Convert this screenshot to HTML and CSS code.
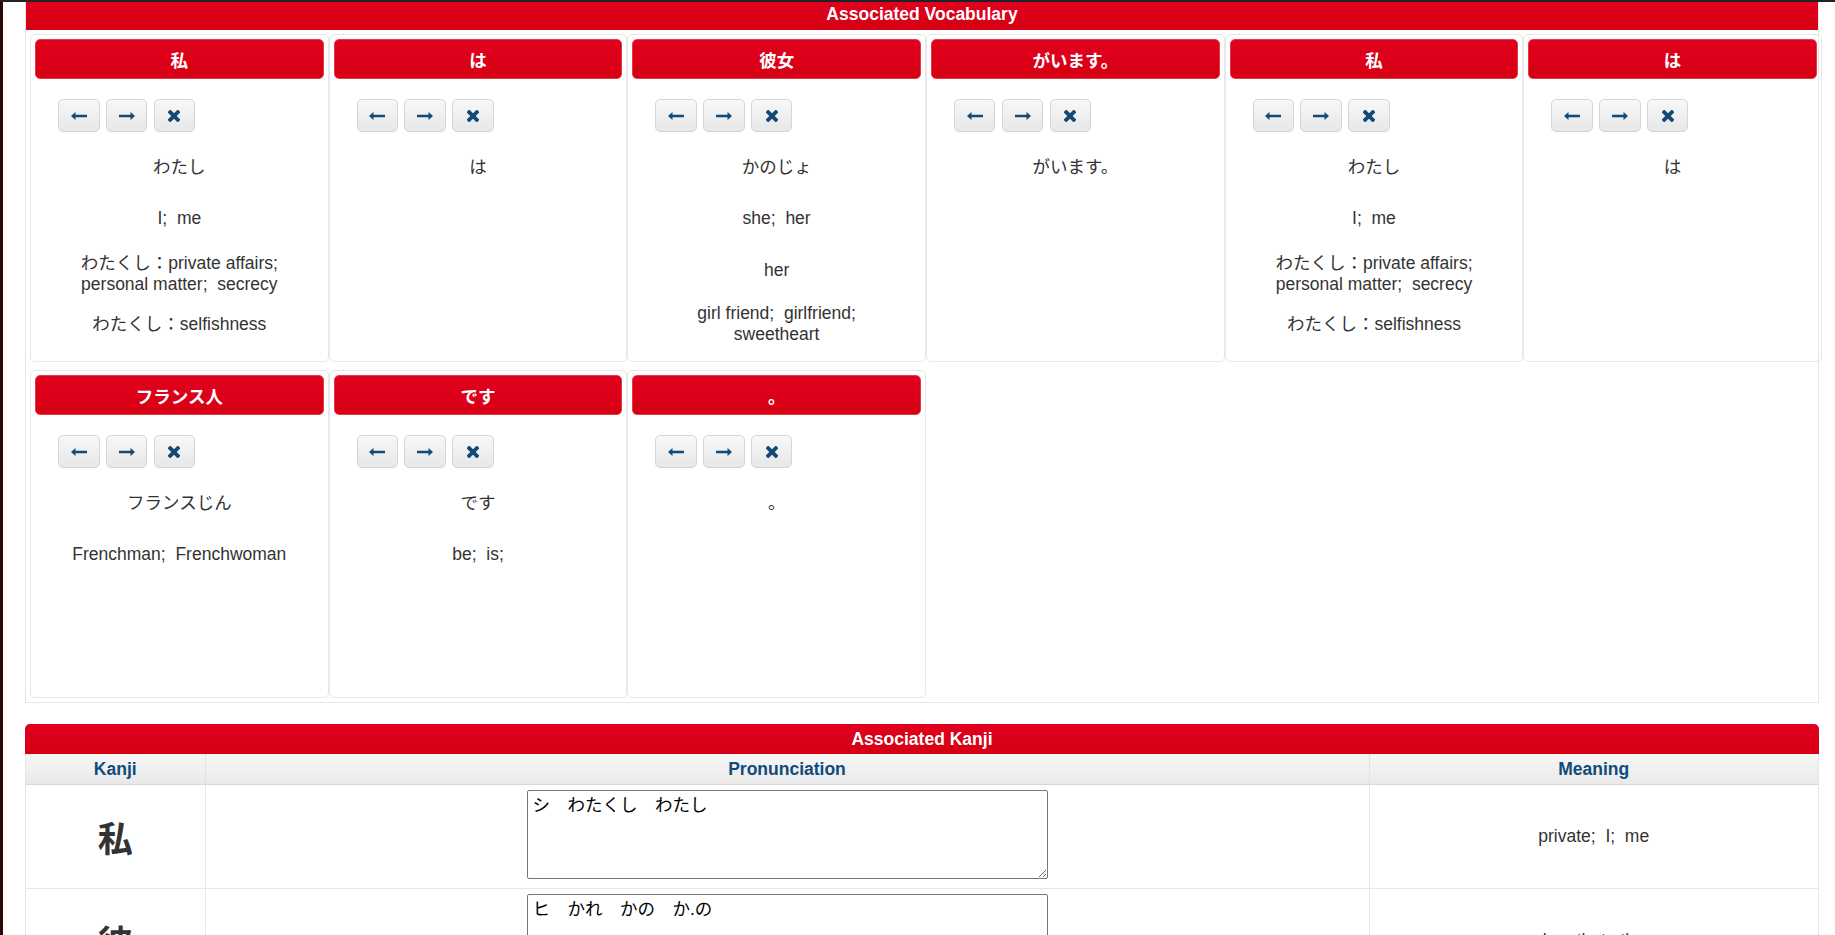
FILE: index.html
```html
<!DOCTYPE html>
<html lang="ja">
<head>
<meta charset="utf-8">
<title>Associated Vocabulary</title>
<link rel="stylesheet" href="styles.css">
</head>
<body>
<div class="topline"></div>
<div class="page">
  <section class="panel vocab">
    <div class="panel-heading">Associated Vocabulary</div>
    <div class="panel-body">
      <div class="cards">

        <div class="card">
          <div class="card-head">私</div>
          <div class="btns">
            <button class="btn"><svg width="16" height="8" viewBox="0 0 16 8"><path d="M0 4 L4.5 0 V2.7 H16 V5.3 H4.5 V8 Z"/></svg></button>
            <button class="btn"><svg width="16" height="8" viewBox="0 0 16 8"><path d="M16 4 L11.5 0 V2.7 H0 V5.3 H11.5 V8 Z"/></svg></button>
            <button class="btn"><svg width="12" height="12" viewBox="0 0 12 12"><path class="x" d="M2.2 2.2 L9.8 9.8 M9.8 2.2 L2.2 9.8"/></svg></button>
          </div>
          <div class="reading">わたし</div>
          <div class="mean first">I;&nbsp; me</div>
          <div class="mean g23">わたくし：private affairs;<br>personal matter;&nbsp; secrecy</div>
          <div class="mean">わたくし：selfishness</div>
        </div>

        <div class="card">
          <div class="card-head">は</div>
          <div class="btns">
            <button class="btn"><svg width="16" height="8" viewBox="0 0 16 8"><path d="M0 4 L4.5 0 V2.7 H16 V5.3 H4.5 V8 Z"/></svg></button>
            <button class="btn"><svg width="16" height="8" viewBox="0 0 16 8"><path d="M16 4 L11.5 0 V2.7 H0 V5.3 H11.5 V8 Z"/></svg></button>
            <button class="btn"><svg width="12" height="12" viewBox="0 0 12 12"><path class="x" d="M2.2 2.2 L9.8 9.8 M9.8 2.2 L2.2 9.8"/></svg></button>
          </div>
          <div class="reading">は</div>
        </div>

        <div class="card">
          <div class="card-head">彼女</div>
          <div class="btns">
            <button class="btn"><svg width="16" height="8" viewBox="0 0 16 8"><path d="M0 4 L4.5 0 V2.7 H16 V5.3 H4.5 V8 Z"/></svg></button>
            <button class="btn"><svg width="16" height="8" viewBox="0 0 16 8"><path d="M16 4 L11.5 0 V2.7 H0 V5.3 H11.5 V8 Z"/></svg></button>
            <button class="btn"><svg width="12" height="12" viewBox="0 0 12 12"><path class="x" d="M2.2 2.2 L9.8 9.8 M9.8 2.2 L2.2 9.8"/></svg></button>
          </div>
          <div class="reading">かのじょ</div>
          <div class="mean first">she;&nbsp; her</div>
          <div class="mean g30">her</div>
          <div class="mean g21">girl friend;&nbsp; girlfriend;<br>sweetheart</div>
        </div>

        <div class="card">
          <div class="card-head">がいます。</div>
          <div class="btns">
            <button class="btn"><svg width="16" height="8" viewBox="0 0 16 8"><path d="M0 4 L4.5 0 V2.7 H16 V5.3 H4.5 V8 Z"/></svg></button>
            <button class="btn"><svg width="16" height="8" viewBox="0 0 16 8"><path d="M16 4 L11.5 0 V2.7 H0 V5.3 H11.5 V8 Z"/></svg></button>
            <button class="btn"><svg width="12" height="12" viewBox="0 0 12 12"><path class="x" d="M2.2 2.2 L9.8 9.8 M9.8 2.2 L2.2 9.8"/></svg></button>
          </div>
          <div class="reading">がいます。</div>
        </div>

        <div class="card">
          <div class="card-head">私</div>
          <div class="btns">
            <button class="btn"><svg width="16" height="8" viewBox="0 0 16 8"><path d="M0 4 L4.5 0 V2.7 H16 V5.3 H4.5 V8 Z"/></svg></button>
            <button class="btn"><svg width="16" height="8" viewBox="0 0 16 8"><path d="M16 4 L11.5 0 V2.7 H0 V5.3 H11.5 V8 Z"/></svg></button>
            <button class="btn"><svg width="12" height="12" viewBox="0 0 12 12"><path class="x" d="M2.2 2.2 L9.8 9.8 M9.8 2.2 L2.2 9.8"/></svg></button>
          </div>
          <div class="reading">わたし</div>
          <div class="mean first">I;&nbsp; me</div>
          <div class="mean g23">わたくし：private affairs;<br>personal matter;&nbsp; secrecy</div>
          <div class="mean">わたくし：selfishness</div>
        </div>

        <div class="card">
          <div class="card-head">は</div>
          <div class="btns">
            <button class="btn"><svg width="16" height="8" viewBox="0 0 16 8"><path d="M0 4 L4.5 0 V2.7 H16 V5.3 H4.5 V8 Z"/></svg></button>
            <button class="btn"><svg width="16" height="8" viewBox="0 0 16 8"><path d="M16 4 L11.5 0 V2.7 H0 V5.3 H11.5 V8 Z"/></svg></button>
            <button class="btn"><svg width="12" height="12" viewBox="0 0 12 12"><path class="x" d="M2.2 2.2 L9.8 9.8 M9.8 2.2 L2.2 9.8"/></svg></button>
          </div>
          <div class="reading">は</div>
        </div>

        <div class="card">
          <div class="card-head">フランス人</div>
          <div class="btns">
            <button class="btn"><svg width="16" height="8" viewBox="0 0 16 8"><path d="M0 4 L4.5 0 V2.7 H16 V5.3 H4.5 V8 Z"/></svg></button>
            <button class="btn"><svg width="16" height="8" viewBox="0 0 16 8"><path d="M16 4 L11.5 0 V2.7 H0 V5.3 H11.5 V8 Z"/></svg></button>
            <button class="btn"><svg width="12" height="12" viewBox="0 0 12 12"><path class="x" d="M2.2 2.2 L9.8 9.8 M9.8 2.2 L2.2 9.8"/></svg></button>
          </div>
          <div class="reading">フランスじん</div>
          <div class="mean first">Frenchman;&nbsp; Frenchwoman</div>
        </div>

        <div class="card">
          <div class="card-head">です</div>
          <div class="btns">
            <button class="btn"><svg width="16" height="8" viewBox="0 0 16 8"><path d="M0 4 L4.5 0 V2.7 H16 V5.3 H4.5 V8 Z"/></svg></button>
            <button class="btn"><svg width="16" height="8" viewBox="0 0 16 8"><path d="M16 4 L11.5 0 V2.7 H0 V5.3 H11.5 V8 Z"/></svg></button>
            <button class="btn"><svg width="12" height="12" viewBox="0 0 12 12"><path class="x" d="M2.2 2.2 L9.8 9.8 M9.8 2.2 L2.2 9.8"/></svg></button>
          </div>
          <div class="reading">です</div>
          <div class="mean first">be;&nbsp; is;</div>
        </div>

        <div class="card">
          <div class="card-head">。</div>
          <div class="btns">
            <button class="btn"><svg width="16" height="8" viewBox="0 0 16 8"><path d="M0 4 L4.5 0 V2.7 H16 V5.3 H4.5 V8 Z"/></svg></button>
            <button class="btn"><svg width="16" height="8" viewBox="0 0 16 8"><path d="M16 4 L11.5 0 V2.7 H0 V5.3 H11.5 V8 Z"/></svg></button>
            <button class="btn"><svg width="12" height="12" viewBox="0 0 12 12"><path class="x" d="M2.2 2.2 L9.8 9.8 M9.8 2.2 L2.2 9.8"/></svg></button>
          </div>
          <div class="reading">。</div>
        </div>

      </div>
    </div>
  </section>

  <section class="panel kanji">
    <div class="panel-heading">Associated Kanji</div>
    <table class="ktable">
      <colgroup>
        <col class="c-kanji">
        <col class="c-pron">
        <col class="c-mean">
      </colgroup>
      <thead>
        <tr><th>Kanji</th><th>Pronunciation</th><th>Meaning</th></tr>
      </thead>
      <tbody>
        <tr>
          <td class="kchar">私</td>
          <td class="pron"><textarea class="ta">シ　わたくし　わたし</textarea></td>
          <td class="kmean">private;&nbsp; I;&nbsp; me</td>
        </tr>
        <tr>
          <td class="kchar">彼</td>
          <td class="pron"><textarea class="ta">ヒ　かれ　かの　か.の</textarea></td>
          <td class="kmean">he;&nbsp; that;&nbsp; the</td>
        </tr>
      </tbody>
    </table>
  </section>
</div>
</body>
</html>
```

FILE: styles.css
```css
html, body {
  margin: 0;
  padding: 0;
  background: #fff;
}

body {
  font-family: "Liberation Sans", "Noto Sans CJK JP", sans-serif;
  font-size: 17.5px;
  color: #333;
  border-left: 3px solid #2a0606;
  min-height: 935px;
  overflow: hidden;
}

.topline {
  position: fixed;
  top: 0;
  left: 0;
  right: 0;
  height: 2px;
  background: #222;
  z-index: 5;
}

.page {
  width: 1794px;
  margin-left: 22px;
}

.panel {
  border: 1px solid #e6e6e6;
  background: #fff;
}

.panel-heading {
  background: linear-gradient(#e1001f, #d60012);
  color: #fff;
  font-weight: bold;
  text-align: center;
}

.vocab {
  border-top: none;
}

.vocab .panel-heading {
  height: 30px;
  padding-top: 4px;
  line-height: 21.5px;
  box-sizing: border-box;
}

.vocab .panel-body {
  padding: 4px;
}

.cards {
  display: grid;
  grid-template-columns: repeat(6, 298.67px);
  row-gap: 8px;
}

.card {
  height: 328px;
  box-sizing: border-box;
  border: 1px solid #e8e8e8;
  border-radius: 5px;
  padding: 4px;
  text-align: center;
  line-height: 21.5px;
}

.card-head {
  height: 40px;
  box-sizing: border-box;
  padding-top: 11px;
  line-height: 21.5px;
  border-radius: 5px;
  border: 1px solid #e03a4c;
  background: linear-gradient(#e1001f, #d60012);
  color: #fff;
  font-weight: bold;
}

.btns {
  display: flex;
  gap: 6.3px;
  margin-top: 20px;
  margin-left: 23px;
}

.btn {
  width: 41.5px;
  height: 33.3px;
  padding: 0;
  box-sizing: border-box;
  border: 1px solid #d3d7d9;
  border-radius: 5px;
  background: linear-gradient(#f8f8f8, #e7e7e7);
  display: flex;
  align-items: center;
  justify-content: center;
}

.btn svg path {
  fill: #134a78;
}

.btn svg path.x {
  fill: none;
  stroke: #134a78;
  stroke-width: 3.8;
  stroke-linecap: square;
}

.reading {
  margin-top: 25px;
}

.mean {
  margin-top: 18.5px;
}

.mean.first { margin-top: 29.5px; }
.mean.g23 { margin-top: 23px; }
.mean.g30 { margin-top: 30.5px; }
.mean.g21 { margin-top: 21px; }

.kanji {
  margin-top: 21px;
  border-top: none;
  border-radius: 5px 5px 0 0;
}

.kanji .panel-heading {
  height: 30px;
  line-height: 30px;
  border-radius: 5px 5px 0 0;
  margin: 0 -1px;
}

.ktable {
  width: 100%;
  border-collapse: collapse;
  table-layout: fixed;
}

.c-kanji { width: 179px; }
.c-mean { width: 449px; }

.ktable th {
  height: 30px;
  box-sizing: border-box;
  padding: 0;
  background: linear-gradient(#f7f7f7, #e9e9e9);
  border-bottom: 1px solid #d5d9dc;
  border-right: 1px solid #e2e2e2;
  color: #0f4c7c;
  font-weight: bold;
  text-align: center;
  line-height: 28px;
}

.ktable th:last-child,
.ktable td:last-child {
  border-right: none;
}

.ktable td {
  height: 104px;
  box-sizing: border-box;
  padding: 0;
  border-bottom: 1px solid #e8e8e8;
  border-right: 1px solid #e8e8e8;
  text-align: center;
  vertical-align: middle;
}

.kchar {
  font-size: 35px;
  font-weight: bold;
  color: #333;
}

.ktable td.pron {
  vertical-align: top;
  padding-top: 5px;
}

.ta {
  display: block;
  margin: 0 auto;
  width: 521px;
  height: 89px;
  box-sizing: border-box;
  border: 1px solid #767676;
  border-radius: 2px;
  padding: 4px 5px;
  font-family: "Liberation Sans", "Noto Sans CJK JP", sans-serif;
  font-size: 17.5px;
  line-height: 21.5px;
  color: #000;
  resize: vertical;
}

.kmean {
  color: #333;
}
```
